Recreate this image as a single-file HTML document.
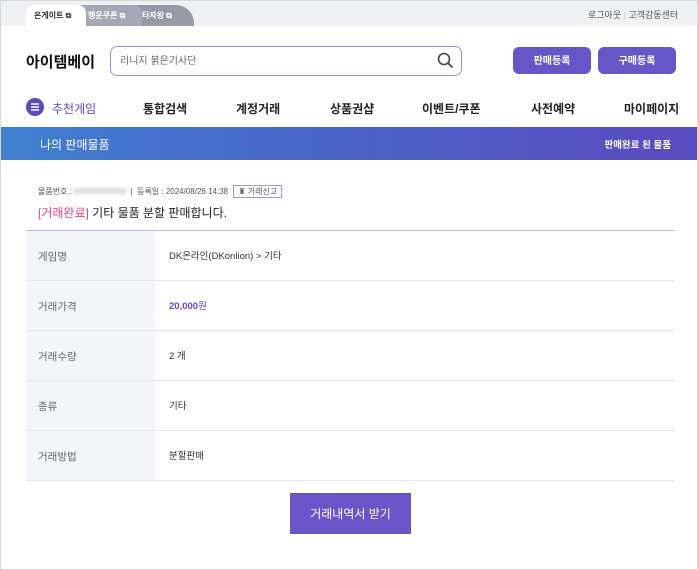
<!DOCTYPE html><html><head><meta charset="utf-8"><style>
*{margin:0;padding:0;box-sizing:border-box}
body{width:698px;height:570px;overflow:hidden;background:#fff;font-family:"Liberation Sans","Noto Sans CJK KR",sans-serif;position:relative;color:#222}
.frame{position:absolute;left:0;top:0;width:698px;height:570px;border:1px solid #d8d8dc}
.top{position:absolute;left:1px;top:1px;width:696px;height:25px;background:#f0f1f4}
.tab{position:absolute;top:5px;height:21px;font-size:8px;font-weight:bold;line-height:22px;padding-left:8px;border-radius:8px 8px 0 0}
.a{position:absolute;font-size:9px;color:#555}
.abs{position:absolute}
.nav{position:absolute;top:100px;font-size:12px;font-weight:bold;color:#222}
.btn{position:absolute;top:47px;width:78px;height:27px;background:#6656c8;border-radius:6px;color:#fff;font-size:10px;font-weight:bold;text-align:center;line-height:29px}
.row{position:absolute;left:26px;width:649px;height:50px;border-bottom:1px solid #e4e5ea}
.row .k{position:absolute;left:0;top:0;width:129px;height:49px;background:#f4f5f8;color:#666;font-size:10.5px;line-height:52px;padding-left:12px}
.row .v{position:absolute;left:143px;top:0;line-height:52px;font-size:9.5px;color:#333}
</style></head><body>
<div class="frame"></div>
<div class="top"></div>
<div class="tab" style="left:26px;width:60px;background:#fff;color:#333;z-index:3">온게이트 ⧉</div>
<div class="tab" style="left:72px;width:70px;background:#a6a8b6;color:#fff;z-index:2;padding-left:16px">행운쿠폰 ⧉</div>
<div class="tab" style="left:126px;width:68px;background:#9799a8;color:#fff;z-index:1;padding-left:16px;border-radius:8px 18px 0 0">타자왕 ⧉</div>
<div class="a" style="left:588px;top:8px">로그아웃 <span style="color:#ccc">|</span> 고객감동센터</div>
<div class="abs" style="left:26px;top:51px;font-size:15px;font-weight:bold;color:#111">아이템베이</div>
<div class="abs" style="left:110px;top:46px;width:352px;height:30px;border:1.5px solid #9d92e0;border-radius:7px;font-size:10px;color:#666;line-height:29px;padding-left:9px">리니지 붉은기사단
<svg style="position:absolute;right:7px;top:5px" width="17" height="17" viewBox="0 0 17 17"><circle cx="7" cy="7" r="5.5" fill="none" stroke="#444" stroke-width="1.6"/><path d="M11 11l4.5 4.5" stroke="#444" stroke-width="1.8"/></svg></div>
<div class="btn" style="left:513px">판매등록</div>
<div class="btn" style="left:598px">구매등록</div>
<svg class="abs" style="left:26px;top:98px" width="18" height="18"><circle cx="9" cy="9" r="9" fill="#5a4bc0"/><path d="M5 6h8M5 9h8M5 12h8" stroke="#fff" stroke-width="1.5"/></svg>
<div class="nav" style="left:52px;color:#5a4bc0;font-weight:normal">추천게임</div>
<div class="nav" style="left:143px">통합검색</div>
<div class="nav" style="left:236px">계정거래</div>
<div class="nav" style="left:330px">상품권샵</div>
<div class="nav" style="left:422px">이벤트/쿠폰</div>
<div class="nav" style="left:531px">사전예약</div>
<div class="nav" style="left:624px">마이페이지</div>
<div class="abs" style="left:1px;top:127px;width:696px;height:33px;background:linear-gradient(90deg,#3f80d0,#4a62c6 50%,#5a4bbf);color:#fff">
<span class="abs" style="left:39px;top:9px;font-size:12px">나의 판매물품</span>
<span class="abs" style="right:26px;top:10px;font-size:9.5px;font-weight:bold">판매완료 된 물품</span></div>
<div class="abs" style="left:38px;top:186px;font-size:8px;color:#555">물품번호 : <span style="display:inline-block;width:52px;height:6px;background:#ddd;filter:blur(1.5px)"></span> &nbsp;| &nbsp;등록일 : 2024/08/26 14:38 <span style="border:1px solid #9aa0b8;padding:1px 4px;margin-left:3px">♜ 거래신고</span></div>
<div class="abs" style="left:38px;top:204px;font-size:12px;color:#222"><span style="color:#e8457a">[거래완료]</span> 기타 물품 분할 판매합니다.</div>
<div class="abs" style="left:26px;top:230px;width:649px;height:1px;background:#b8bce0"></div>
<div class="row" style="top:231px"><div class="k">게임명</div><div class="v">DK온라인(DKonlion) &gt; 기타</div></div>
<div class="row" style="top:281px"><div class="k">거래가격</div><div class="v" style="color:#6a44c0;font-weight:bold">20,000<span style="font-weight:normal">원</span></div></div>
<div class="row" style="top:331px"><div class="k">거래수량</div><div class="v">2 개</div></div>
<div class="row" style="top:381px"><div class="k">종류</div><div class="v">기타</div></div>
<div class="row" style="top:431px"><div class="k">거래방법</div><div class="v">분할판매</div></div>
<div class="abs" style="left:290px;top:493px;width:121px;height:41px;background:#6a55c8;color:#fff;font-size:12px;text-align:center;line-height:42px">거래내역서 받기</div>
</body></html>
